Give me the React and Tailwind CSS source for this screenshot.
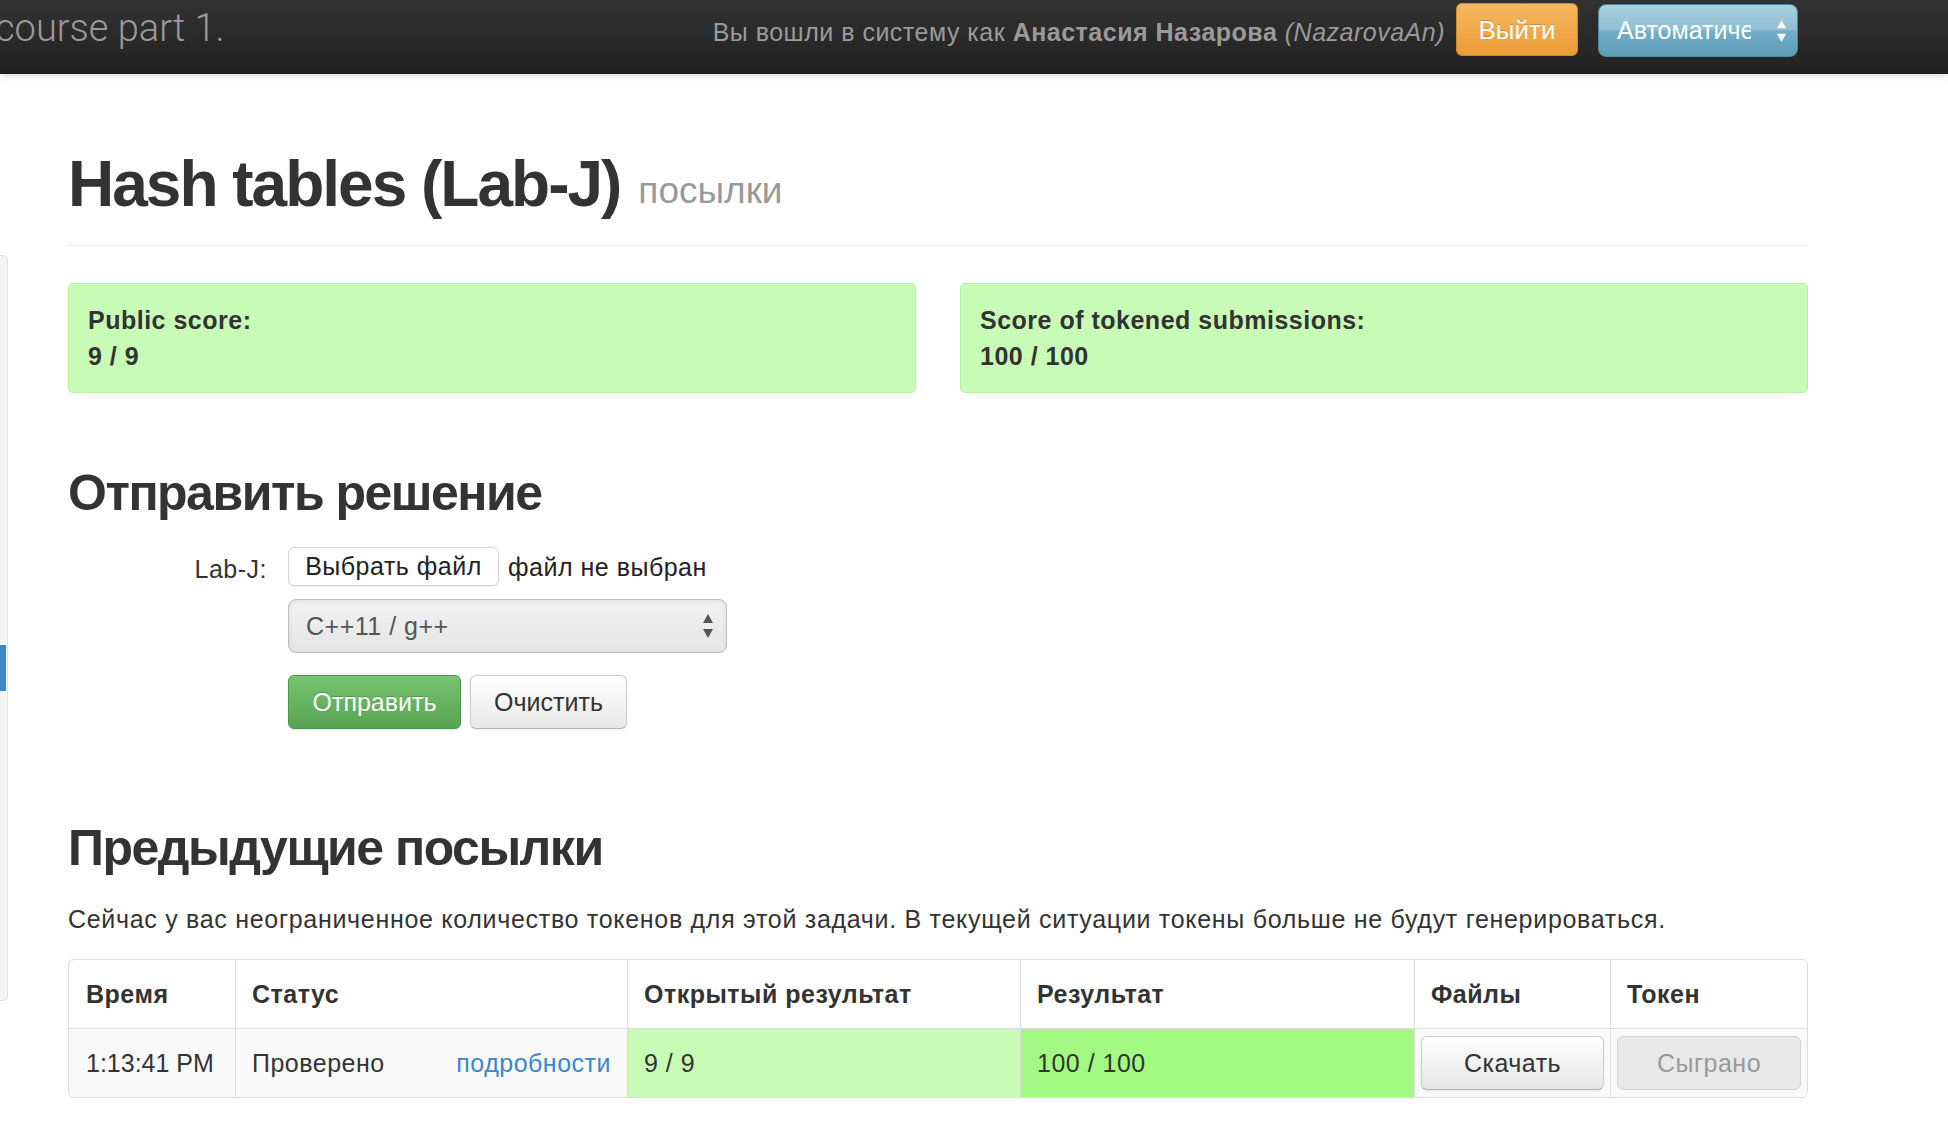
import React from "react";

function UpDown({ color = "#fff", w = 12, h = 26 }) {
  return (
    <svg width={w} height={h} viewBox="0 0 12 26">
      <polygon points="6,1 11,10 1,10" fill={color} />
      <polygon points="1,16 11,16 6,25" fill={color} />
    </svg>
  );
}

export default function App() {
  return (
    <div className="w-[1948px] h-[1148px] overflow-hidden bg-white text-[#333] text-[25px] leading-[36px] tracking-[0.5px] font-['Liberation_Sans',Arial,sans-serif]">
      {/* Navbar */}
      <div className="relative z-10 h-[74px] bg-linear-to-b from-[#323232] to-[#222222] border-b border-[#1a1a1a] shadow-[0_3px_6px_rgba(0,0,0,0.12)]">
        <div className="h-[61px] flex items-center">
          <div className="ml-[-5px] mt-[-6px] font-['Roboto',sans-serif] font-light text-[38px] leading-none tracking-normal text-[#9a9a9a]">
            course part 1.
          </div>
          <div className="flex-1" />
          <div className="mt-[4px] text-[25px] leading-none text-[#9a9a9a] whitespace-nowrap">
            Вы вошли в систему как <b>Анастасия Назарова</b> <i>(NazarovaAn)</i>
          </div>
          <button className="ml-[11px] w-[122px] h-[53px] mt-[-2px] rounded-[6px] border border-[#d08a22] bg-linear-to-b from-[#f6b85e] to-[#eb9c35] text-white text-[26px] leading-none tracking-normal [text-shadow:0_-1px_0_rgba(0,0,0,0.2)]">
            Выйти
          </button>
          <div className="ml-[20px] w-[200px] h-[53px] rounded-[8px] border border-[#4e88a0] bg-[linear-gradient(to_bottom,#a9d0e0_0%,#8fbfd3_48%,#72adc6_52%,#5f9db8_100%)] flex items-center pl-[18px] pr-[10px]">
            <div className="w-[134px] overflow-hidden whitespace-nowrap text-white text-[25px] leading-none tracking-normal">
              Автоматический
            </div>
            <div className="flex-1" />
            <UpDown color="#fff" w={11} h={24} />
          </div>
          <div className="w-[150px]" />
        </div>
      </div>

      <div className="flex">
        {/* Sidebar strip (cut off on the left) */}
        <div className="mt-[181px] h-[746px] w-[8px] bg-[#f4f4f4] border border-l-0 border-[#e2e2e2] rounded-r-[5px] flex flex-col">
          <div className="h-[389px]" />
          <div className="h-[46px] w-[6px] bg-[#3b86c6]" />
        </div>

        {/* Main content */}
        <div className="ml-[60px] w-[1740px] pt-[72px]">
          <div className="pb-[13px] border-b border-[#eeeeee]">
            <h1 className="text-[64px] leading-[76px] font-bold tracking-[-2px] text-[#333]">
              Hash tables (Lab-J)
              <span className="relative top-[-3px] ml-[18px] text-[37px] font-normal tracking-normal text-[#999]">посылки</span>
            </h1>
          </div>

          <div className="mt-[37px] grid grid-cols-2 gap-[44px]">
            <div className="h-[110px] rounded-[5px] border border-[#b8efa3] bg-[#c8fcb6] px-[19px] py-[18px] font-bold">
              <div>Public score:</div>
              <div>9 / 9</div>
            </div>
            <div className="h-[110px] rounded-[5px] border border-[#b8efa3] bg-[#c8fcb6] px-[19px] py-[18px] font-bold">
              <div>Score of tokened submissions:</div>
              <div>100 / 100</div>
            </div>
          </div>

          <h2 className="mt-[70px] text-[50px] leading-[60px] font-bold tracking-[-1.5px]">Отправить решение</h2>

          <div className="mt-[24px]">
            <div className="flex items-center h-[39px]">
              <div className="w-[220px] pr-[21px] text-right mt-[5px]">Lab-J:</div>
              <button className="h-[39px] w-[211px] rounded-[6px] border border-[#d6d6d6] bg-white shadow-[0_1px_1px_rgba(0,0,0,0.08)] text-[25px] leading-none text-[#222]">
                Выбрать файл
              </button>
              <span className="ml-[9px] text-[#222]">файл не выбран</span>
            </div>
            <div className="mt-[13px] ml-[220px]">
              <div className="w-[439px] h-[54px] rounded-[8px] border border-[#bdbdbd] bg-[linear-gradient(to_bottom,#f3f3f3,#e4e4e4)] shadow-[inset_0_2px_4px_rgba(0,0,0,0.08)] flex items-center pl-[17px] pr-[12px]">
                <span className="text-[#555]">C++11 / g++</span>
                <div className="flex-1" />
                <UpDown color="#555" w={12} h={26} />
              </div>
            </div>
            <div className="mt-[22px] ml-[220px] flex gap-[9px]">
              <button className="h-[54px] w-[173px] rounded-[6px] border border-[#4e964b] bg-linear-to-b from-[#78c36f] to-[#58a454] text-white text-[25px] leading-none tracking-normal [text-shadow:0_-1px_0_rgba(0,0,0,0.2)] shadow-[0_1px_2px_rgba(0,0,0,0.1)]">
                Отправить
              </button>
              <button className="h-[54px] w-[157px] rounded-[6px] border border-[#cdcdcd] border-b-[#b5b5b5] bg-linear-to-b from-[#ffffff] to-[#e8e8e8] text-[#333] text-[25px] leading-none tracking-normal shadow-[0_1px_2px_rgba(0,0,0,0.08)]">
                Очистить
              </button>
            </div>
          </div>

          <h2 className="mt-[89px] text-[50px] leading-[60px] font-bold tracking-[-1.5px]">Предыдущие посылки</h2>

          <p className="mt-[23px] tracking-[0.7px]">
            Сейчас у вас неограниченное количество токенов для этой задачи. В текущей ситуации токены больше не будут генерироваться.
          </p>

          <div className="mt-[22px] rounded-[6px] border border-[#dddddd] overflow-hidden grid grid-cols-[166px_392px_393px_394px_196px_197px]">
            <div className="h-[69px] border-b border-[#dddddd] flex items-center px-[17px] font-bold">Время</div>
            <div className="h-[69px] border-b border-l border-[#dddddd] flex items-center px-[16px] font-bold">Статус</div>
            <div className="h-[69px] border-b border-l border-[#dddddd] flex items-center px-[16px] font-bold">Открытый результат</div>
            <div className="h-[69px] border-b border-l border-[#dddddd] flex items-center px-[16px] font-bold">Результат</div>
            <div className="h-[69px] border-b border-l border-[#dddddd] flex items-center px-[16px] font-bold">Файлы</div>
            <div className="h-[69px] border-b border-l border-[#dddddd] flex items-center px-[16px] font-bold">Токен</div>

            <div className="h-[68px] bg-[#f9f9f9] flex items-center px-[17px] whitespace-nowrap tracking-normal">1:13:41 PM</div>
            <div className="h-[68px] bg-[#f9f9f9] border-l border-[#dddddd] flex items-center justify-between pl-[16px] pr-[16px]">
              <span>Проверено</span>
              <a className="text-[#3a87cc]">подробности</a>
            </div>
            <div className="h-[68px] bg-[#c8fcb6] border-l border-[#dddddd] flex items-center px-[16px]">9 / 9</div>
            <div className="h-[68px] bg-[#a2fa82] border-l border-[#dddddd] flex items-center px-[16px]">100 / 100</div>
            <div className="h-[68px] bg-[#f9f9f9] border-l border-[#dddddd] flex items-center px-[6px]">
              <button className="w-full h-[54px] rounded-[6px] border border-[#cdcdcd] border-b-[#b3b3b3] bg-linear-to-b from-[#ffffff] to-[#e6e6e6] text-[#333] text-[25px] leading-none shadow-[0_1px_2px_rgba(0,0,0,0.08)]">
                Скачать
              </button>
            </div>
            <div className="h-[68px] bg-[#f9f9f9] border-l border-[#dddddd] flex items-center px-[6px]">
              <button className="w-full h-[54px] rounded-[6px] border border-[#d5d5d5] bg-[#e9e9e9] text-[#999] text-[25px] leading-none">
                Сыграно
              </button>
            </div>
          </div>
        </div>
      </div>
    </div>
  );
}
